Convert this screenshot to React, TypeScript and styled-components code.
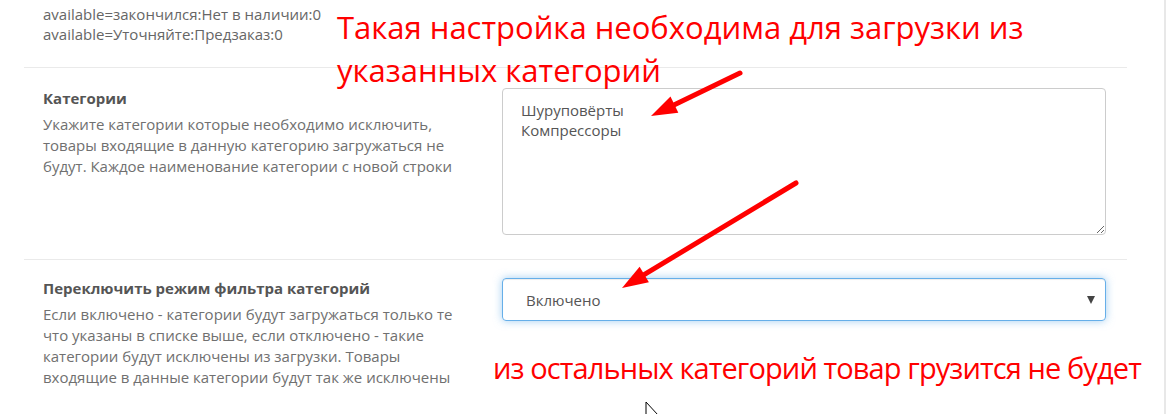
import React from "react";
import styled, { createGlobalStyle } from "styled-components";

const GlobalStyle = createGlobalStyle`
    html, body {
        margin: 0;
        padding: 0;
        background: #fff;
    }

    body {
        font-family: "Open Sans", "Liberation Sans", sans-serif;
        font-size: 15px;
        color: #666;
    }
`;

const Page = styled.div`
    position: relative;
    width: 1164px;
    height: 414px;
    overflow: hidden;
    border-right: 2px solid #e8e8e8;
`;

const Panel = styled.div`
    width: 1103px;
    margin-left: 24px;
`;

const Intro = styled.div`
    padding: 4px 19px 23px;
    line-height: 20px;
`;

interface RowProps {
    $top: number;
    $bottom: number;
}

const Row = styled.div<RowProps>`
    display: grid;
    grid-template-columns: 459px 604px;
    padding: ${(p) => p.$top}px 19px ${(p) => p.$bottom}px;
    border-top: 1px solid #eaeaea;
`;

const Label = styled.div`
    padding-right: 43px;
`;

const Title = styled.div`
    font-weight: 700;
    color: #555;
    line-height: 20px;
    margin-bottom: 6px;
`;

const Hint = styled.div`
    line-height: 21px;
    color: #707070;
`;

const TextArea = styled.textarea`
    display: block;
    box-sizing: border-box;
    width: 604px;
    height: 147px;
    padding: 11px 18px;
    border: 1px solid #ccc;
    border-radius: 4px;
    font-family: "Open Sans", "Liberation Sans", sans-serif;
    font-size: 15px;
    line-height: 20px;
    color: #555;
    resize: vertical;
    outline: none;
`;

const SelectBox = styled.div`
    box-sizing: border-box;
    height: 43px;
    display: flex;
    align-items: center;
    padding: 0 23px;
    border: 1px solid #66afe9;
    border-radius: 4px;
    box-shadow: inset 0 1px 1px rgba(0, 0, 0, 0.075), 0 0 8px rgba(102, 175, 233, 0.6);
    color: #555;
    line-height: 20px;
`;

const Caret = styled.span`
    margin-left: auto;
    margin-right: -13px;
    width: 0;
    height: 0;
    border-left: 4px solid transparent;
    border-right: 4px solid transparent;
    border-top: 8px solid #444;
`;

interface NoteProps {
    $x: number;
    $y: number;
    $size: number;
    $spacing?: number;
}

const Note = styled.div<NoteProps>`
    position: absolute;
    left: ${(p) => p.$x}px;
    top: ${(p) => p.$y}px;
    font-family: "Open Sans", "Liberation Sans", sans-serif;
    font-size: ${(p) => p.$size}px;
    letter-spacing: ${(p) => p.$spacing ?? 0}px;
    line-height: 43px;
    color: #ff0000;
    white-space: nowrap;
`;

const Overlay = styled.svg`
    position: absolute;
    left: 0;
    top: 0;
    pointer-events: none;
`;

const Arrow = ({ x1, y1, x2, y2 }: { x1: number; y1: number; x2: number; y2: number }) => {
    const dx = x2 - x1;
    const dy = y2 - y1;
    const len = Math.hypot(dx, dy);
    const ux = dx / len;
    const uy = dy / len;
    const head = 26;
    const half = 9;
    const bx = x2 - ux * head;
    const by = y2 - uy * head;
    const pts = `${x2},${y2} ${bx - uy * half},${by + ux * half} ${bx + uy * half},${by - ux * half}`;
    return (
        <g>
            <line x1={x1} y1={y1} x2={bx + ux * 4} y2={by + uy * 4} stroke="#ff0000" strokeWidth={5} strokeLinecap="round" />
            <polygon points={pts} fill="#ff0000" />
        </g>
    );
};

const App = (): JSX.Element => (
    <Page>
        <GlobalStyle />
        <Panel>
            <Intro>
                available=закончился:Нет в наличии:0
                <br />
                available=Уточняйте:Предзаказ:0
            </Intro>
            <Row $top={20} $bottom={24}>
                <Label>
                    <Title>Категории</Title>
                    <Hint>
                        Укажите категории которые необходимо исключить, товары входящие в данную категорию загружаться
                        не будут. Каждое наименование категории с новой строки
                    </Hint>
                </Label>
                <TextArea readOnly defaultValue={"Шуруповёрты\nКомпрессоры"} />
            </Row>
            <Row $top={18} $bottom={30}>
                <Label>
                    <Title>Переключить режим фильтра категорий</Title>
                    <Hint>
                        Если включено - категории будут загружаться только те что указаны в списке выше, если отключено -
                        такие категории будут исключены из загрузки. Товары входящие в данные категории будут так же
                        исключены
                    </Hint>
                </Label>
                <div>
                    <SelectBox>
                        Включено
                        <Caret />
                    </SelectBox>
                </div>
            </Row>
        </Panel>

        <Note $x={337} $y={6} $size={31}>
            Такая настройка необходима для загрузки из
            <br />
            указанных категорий
        </Note>
        <Note $x={493} $y={346} $size={29} $spacing={-0.9}>
            из остальных категорий товар грузится не будет
        </Note>

        <Overlay width={1168} height={414}>
            <Arrow x1={740} y1={73} x2={651} y2={116} />
            <Arrow x1={796} y1={183} x2={622} y2={288} />
            <path d="M646 402 L646 420 L650 416 L654 424 L656 423 L652 415 L658 415 Z" fill="#fff" stroke="#000" strokeWidth={1} />
        </Overlay>
    </Page>
);

export default App;
